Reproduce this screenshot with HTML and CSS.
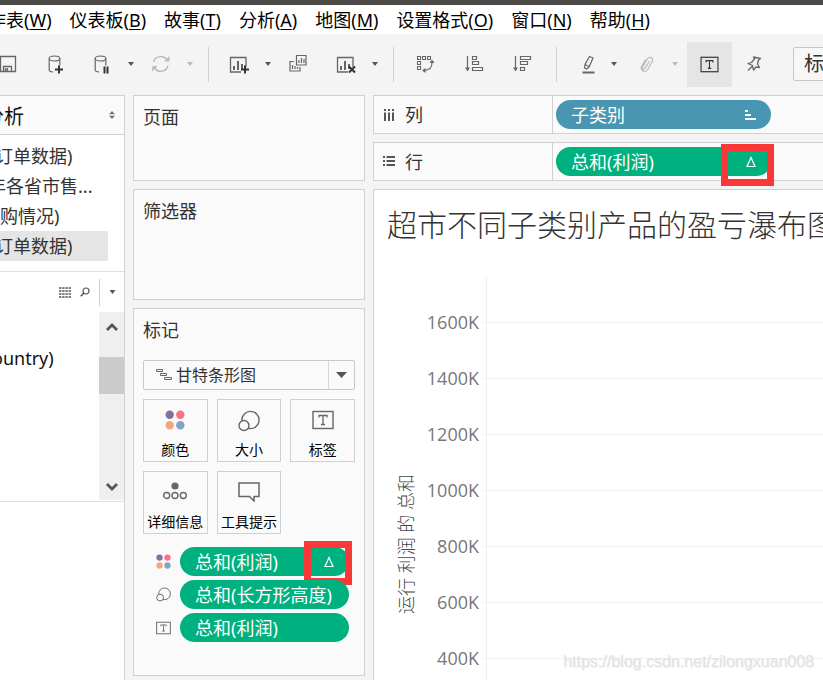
FILE: index.html
```html
<!DOCTYPE html>
<html lang="zh-CN">
<head>
<meta charset="utf-8">
<title>工作表</title>
<link rel="stylesheet" href="styles.css">
</head>
<body>
<svg class="defs" aria-hidden="true">
  <symbol id="caret" viewBox="0 0 6 4"><path d="M0 0h6L3 4z" fill="currentColor"/></symbol>
  <symbol id="db" viewBox="0 0 28 28"><g fill="none" stroke="#666" stroke-width="1.2"><ellipse cx="12.500" cy="8.500" rx="5.300" ry="2.500"/><path d="M7.200 8.500v11.500q0 1.600 4 2M17.800 8.500v7"/></g></symbol>
  <symbol id="chart" viewBox="0 0 28 28"><path d="M16 22H5.500V7.500h15.500V17" fill="none" stroke="#666" stroke-width="1.300"/><path d="M8 16h2v4H8zM12 11h2v9h-2zM16 14h2v5h-2z" fill="#666"/></symbol>
  <symbol id="dots" viewBox="0 0 20 20"><circle cx="4.700" cy="4.700" r="4.200" fill="#86709a"/><circle cx="15.300" cy="4.700" r="4.200" fill="#fa7280"/><circle cx="4.700" cy="15.300" r="4.200" fill="#f4a67c"/><circle cx="15.300" cy="15.300" r="4.200" fill="#82a4cb"/></symbol>
  <symbol id="size" viewBox="0 0 22 22"><g stroke="#666" stroke-width="1.400" fill="#fafafa"><circle cx="12.500" cy="10" r="8.600"/><circle cx="6" cy="15.500" r="5"/></g></symbol>
  <symbol id="text" viewBox="0 0 22 20"><rect x="1" y="1.500" width="20" height="17" fill="none" stroke="currentColor" stroke-width="1.400"/><path d="M7 7.500V5.500h8v2M11 5.500v9M9 14.500h4" fill="none" stroke="currentColor" stroke-width="1.300"/></symbol>
  <symbol id="delta" viewBox="0 0 10 12"><path d="M5 1.500L9 10.500H1z" fill="none" stroke="#fff" stroke-width="1.200"/></symbol>
</svg>
<div class="titlebar"></div>
<nav class="menu">
  <a href="#">工作表(<u>W</u>)</a><a href="#">仪表板(<u>B</u>)</a><a href="#">故事(<u>T</u>)</a><a href="#">分析(<u>A</u>)</a><a href="#">地图(<u>M</u>)</a><a href="#">设置格式(<u>O</u>)</a><a href="#">窗口(<u>N</u>)</a><a href="#">帮助(<u>H</u>)</a>
</nav>
<div class="toolbar">
  <button class="tool" aria-label="保存"><svg viewBox="0 0 28 28"><path d="M6.500 6.500h15v15h-15zM9.500 21v-4.500h8V21M11.500 21v-2h2v2" fill="none" stroke="#666" stroke-width="1.300"/></svg></button>
  <button class="tool g20" aria-label="新建数据源"><svg viewBox="0 0 28 28"><use href="#db"/><path d="M17 15.500v8M13 19.500h8" stroke="#333" stroke-width="2" fill="none"/></svg></button>
  <div class="split g18"><button class="tool" aria-label="暂停自动更新"><svg viewBox="0 0 28 28"><use href="#db"/><path d="M16.500 16.500v7M19.500 16.500v7" stroke="#333" stroke-width="2" fill="none"/></svg></button><button class="drop" aria-label="更新选项"><svg><use href="#caret"/></svg></button></div>
  <div class="split off g8"><button class="tool" aria-label="运行更新"><svg viewBox="0 0 28 28"><path d="M6.500 12a7.500 7.500 0 0 1 13.500-2M21 15.500a7.500 7.500 0 0 1-13.500 2.500" fill="none" stroke="#bbb" stroke-width="1.400"/><path d="M17 11.500h5.500V6zM10.500 16H5.500L5 21.500z" fill="#bbb"/></svg></button><button class="drop" aria-label="运行选项"><svg><use href="#caret"/></svg></button></div>
  <span class="sep g10"></span>
  <div class="split g16"><button class="tool" aria-label="新建工作表"><svg viewBox="0 0 28 28"><use href="#chart"/><path d="M20 15.500v8M16 19.500h8" stroke="#333" stroke-width="2"/></svg></button><button class="drop" aria-label="新建选项"><svg><use href="#caret"/></svg></button></div>
  <button class="tool g8" aria-label="复制工作表"><svg viewBox="0 0 28 28"><path d="M12.500 5.500h9.500v9.500h-9.500zM10 11.500H6v9.500h10v-4M15 13v-3M17.500 13V8M20 13V9M8.500 19v-4M11 19v-3M13.500 19v-2" fill="none" stroke="#666" stroke-width="1.200"/></svg></button>
  <div class="split g20"><button class="tool" aria-label="清除工作表"><svg viewBox="0 0 28 28"><use href="#chart"/><path d="M17 16.500l6 6M23 16.500l-6 6" stroke="#333" stroke-width="2"/></svg></button><button class="drop" aria-label="清除选项"><svg><use href="#caret"/></svg></button></div>
  <span class="sep g10"></span>
  <button class="tool g18" aria-label="交换行和列"><svg viewBox="0 0 28 28"><g fill="none" stroke="#666" stroke-width="1.100"><path d="M5.500 6.500h3v3h-3zM10.500 6.500h3v3h-3zM15.500 6.500h3v3h-3zM5.500 11.500h3v3h-3zM5.500 16.500h3v3h-3zM20 11v2q0 7-8 7.500"/></g><path d="M17.500 13L20 9.500l2.500 3.500zM13.500 18v5L10 20.500z" fill="#666"/></svg></button>
  <button class="tool g20" aria-label="升序排序"><svg viewBox="0 0 28 28"><path d="M7.500 6v14M12.500 6.500h4v3h-4zM12.500 11.500h6v3h-6zM12.500 17.500h10v3h-10z" fill="none" stroke="#666" stroke-width="1.200"/><path d="M5 17.500h5L7.500 21.500z" fill="#666"/></svg></button>
  <button class="tool g20" aria-label="降序排序"><svg viewBox="0 0 28 28"><path d="M7.500 6v14M12.500 6.500h10v3h-10zM12.500 11.500h7v3h-7zM12.500 17.500h4v3h-4z" fill="none" stroke="#666" stroke-width="1.200"/><path d="M5 17.500h5L7.500 21.500z" fill="#666"/></svg></button>
  <span class="sep g20"></span>
  <div class="split tight g18"><button class="tool" aria-label="突出显示"><svg viewBox="0 0 28 28"><path d="M14.500 6.500l3.500 1.500-4 9-2.500 2-2-1 .5-3.500zM10 14.500l4 2" fill="none" stroke="#666" stroke-width="1.200"/><path d="M7.500 22.500h12" stroke="#666" stroke-width="2"/></svg></button><button class="drop" aria-label="突出显示选项"><svg><use href="#caret"/></svg></button></div>
  <div class="split off g10"><button class="tool" aria-label="组成员"><svg viewBox="0 0 28 28"><path d="M17.500 11l-4.500 7.500q-1 1.500-2 .8t-.3-2.200l4.800-8.500q1.500-2 3.500-1t1.500 3.400l-5 9q-2 2.500-4.500 1t-1.500-4.500l4-7" fill="none" stroke="#bbb" stroke-width="1.200"/></svg></button><button class="drop" aria-label="组选项"><svg><use href="#caret"/></svg></button></div>
  <button class="tool on g4" aria-label="显示标记标签"><svg viewBox="0 0 22 20"><use href="#text"/></svg></button>
  <button class="tool g8" aria-label="固定轴"><svg viewBox="0 0 28 28"><path d="M13.500 7l7 1.500-2 1.500-1 4 2 3.500-3.500-.5-2.500 3-1-4.500-4.500-2 3.500-1 3-3.500zM12 16.500L8 20.500" fill="none" stroke="#666" stroke-width="1.300" stroke-linejoin="round"/></svg></button>
  <select class="fit" aria-label="适合"><option>标准</option></select>
</div>
<main class="work">
  <aside class="data">
    <header class="data-head"><span>分析</span><button aria-label="切换"><svg viewBox="0 0 6 8"><path d="M0 3.200h6L3 0zM0 4.800h6L3 8z" fill="#6b7580"/></svg></button></header>
    <ul class="sources">
      <li class="cut">订单数据)</li>
      <li class="cut-more">年各省市售...</li>
      <li>购情况)</li>
      <li class="cut current">订单数据)</li>
    </ul>
    <div class="finder">
      <button aria-label="查看数据"><svg width="12" height="11" viewBox="0 0 12 11"><path d="M0 1h12M0 4h12M0 7h12M0 10h12" stroke="#555" stroke-width="1.300" stroke-dasharray="2.400 .8"/></svg></button>
      <button aria-label="查找字段"><svg width="10" height="10" viewBox="0 0 10 10"><circle cx="6" cy="4" r="3" fill="none" stroke="#555" stroke-width="1.200"/><path d="M4 6L.8 9.300" stroke="#555" stroke-width="1.500"/></svg></button>
      <button class="finder-menu" aria-label="字段菜单"><svg width="7" height="4" viewBox="0 0 6 4"><use href="#caret"/></svg></button>
    </div>
    <div class="fields">
      <p>ountry)</p>
      <div class="scroll">
        <svg width="12" height="10" viewBox="0 0 12 10"><path d="M1 8l5-5 5 5" fill="none" stroke="#555" stroke-width="2.800"/></svg>
        <span class="thumb"></span>
        <svg width="12" height="10" viewBox="0 0 12 10"><path d="M1 2l5 5 5-5" fill="none" stroke="#555" stroke-width="2.800"/></svg>
      </div>
    </div>
  </aside>
  <section class="cards">
    <div class="card pages"><h2>页面</h2></div>
    <div class="card filters"><h2>筛选器</h2></div>
    <div class="card marks">
      <h2>标记</h2>
      <div class="marktype">
        <svg width="16" height="12" viewBox="0 0 16 12"><path d="M.5.500h6v2h-6zM4.500 4.500h6v2h-6zM8.500 8.500h7v2h-7z" fill="none" stroke="#666"/></svg>
        <select aria-label="标记类型"><option>甘特条形图</option></select>
        <span class="arrow"><svg width="11" height="6" viewBox="0 0 6 4" preserveAspectRatio="none"><path d="M0 0h6L3 4z" fill="#555"/></svg></span>
      </div>
      <div class="props">
        <button><svg width="20" height="20"><use href="#dots"/></svg>颜色</button>
        <button><svg width="22" height="22"><use href="#size"/></svg>大小</button>
        <button><svg width="22" height="20"><use href="#text"/></svg>标签</button>
        <button><svg width="24" height="18" viewBox="0 0 24 18"><circle cx="12" cy="4" r="3.600" fill="#666"/><g fill="none" stroke="#666" stroke-width="1.400"><circle cx="3.700" cy="13.500" r="3"/><circle cx="12" cy="13.500" r="3"/><circle cx="20.300" cy="13.500" r="3"/></g></svg>详细信息</button>
        <button><svg width="22" height="20" viewBox="0 0 22 20"><path d="M1 1h20v13.500h-5V19l-4.500-4.500H1z" fill="none" stroke="#666" stroke-width="1.500"/></svg>工具提示</button>
      </div>
      <div class="encodings">
        <div class="enc"><svg width="15" height="15"><use href="#dots"/></svg><button class="pill">总和(利润)<svg width="10" height="12"><use href="#delta"/></svg></button><span class="callout"></span></div>
        <div class="enc"><svg width="15" height="15"><use href="#size"/></svg><button class="pill">总和(长方形高度)</button></div>
        <div class="enc"><svg width="15" height="14"><use href="#text"/></svg><button class="pill">总和(利润)</button></div>
      </div>
    </div>
  </section>
  <section class="sheet">
    <div class="shelf"><div class="shelf-name"><svg width="12" height="12" viewBox="0 0 12 12"><path d="M2 0v2M6 0v2M10 0v2M2 3.500V12M6 3.500V12M10 3.500V12" stroke="#555" stroke-width="2"/></svg>列</div><div class="shelf-body"><button class="pill blue">子类别<svg width="11" height="10" viewBox="0 0 11 10"><path d="M0 1h3M0 5h6M0 9h11" stroke="#fff" stroke-width="2"/></svg></button></div></div>
    <div class="shelf"><div class="shelf-name"><svg width="12" height="12" viewBox="0 0 12 12"><path d="M0 1h2M0 5h2M0 9h2M3.500 1H12M3.500 5H12M3.500 9H12" stroke="#555" stroke-width="2"/></svg>行</div><div class="shelf-body"><button class="pill">总和(利润)<svg width="10" height="12"><use href="#delta"/></svg></button><span class="callout"></span></div></div>
    <div class="view">
      <h1>超市不同子类别产品的盈亏瀑布图</h1>
      <div class="chart">
        <div class="axis-title"><span>运行 利润 的 总和</span></div>
        <ol class="axis"><li>1600K</li><li>1400K</li><li>1200K</li><li>1000K</li><li>800K</li><li>600K</li><li>400K</li></ol>
        <div class="plot"><i></i><i></i><i></i><i></i><i></i><i></i><i></i></div>
      </div>
    </div>
  </section>
</main>
<div class="watermark">https://blog.csdn.net/zilongxuan008</div>
</body>
</html>
```
FILE: styles.css
```css
* { box-sizing: border-box; }
body {
  margin: 0;
  height: 100vh;
  display: flex;
  flex-direction: column;
  overflow: hidden;
  position: relative;
  background: #f4f4f4;
  color: #333;
  font: 18px/24px "Noto Sans", "Noto Sans CJK SC", sans-serif;
}
button, select { font: inherit; color: inherit; background: none; border: 0; padding: 0; margin: 0; appearance: none; }
h1, h2, p, ul, ol { margin: 0; padding: 0; list-style: none; font-weight: normal; }
svg { flex: none; }
.defs { position: absolute; width: 0; height: 0; }
.titlebar { flex: none; height: 5px; background: #4b4a47; }

.menu { flex: none; display: flex; gap: 18px; height: 29px; background: #fff; line-height: 31px; white-space: nowrap; }
.menu a { color: #000; text-decoration: none; }
.menu a:first-child { margin-left: -30px; }
.menu u { text-underline-offset: 2px; text-decoration-thickness: 1px; }

.toolbar { flex: none; display: flex; align-items: center; height: 61px; margin-left: -6px; padding-bottom: 1px; overflow: hidden; }
.tool { flex: none; width: 28px; height: 28px; }
.tool svg { display: block; width: 28px; height: 28px; }
.tool.on { width: 45px; height: 45px; background: #e5e5e5; color: #333; display: grid; place-items: center; }
.tool.on svg { width: 19px; height: 17px; }
.split { flex: none; display: flex; align-items: center; gap: 7px; color: #555; }
.split.tight { gap: 3px; }
.split.off { color: #bbb; }
.drop { width: 16px; height: 28px; display: grid; place-items: center; }
.drop svg { width: 6px; height: 4px; }
.sep { flex: none; width: 1px; height: 35px; background: #d0d0d0; }
.g4 { margin-left: 4px; }
.g8 { margin-left: 8px; }
.g10 { margin-left: 10px; }
.g16 { margin-left: 16px; }
.g18 { margin-left: 18px; }
.g20 { margin-left: 20px; }
.fit { flex: none; width: 120px; height: 34px; margin-left: 25px; padding-left: 10px; border: 1px solid #c8c8c8; border-radius: 2px; background: #f7f7f7; font-size: 20px; }

.work { flex: 1; min-height: 0; display: flex; gap: 8px; }
.data { flex: none; width: 125px; border: solid #d0d0d0; border-width: 1px 1px 0 0; background: #fff; overflow: hidden; }
.data-head { display: flex; justify-content: space-between; align-items: center; height: 39px; padding-right: 9px; border-bottom: 1px solid #d0d0d0; background: #fafafa; font-size: 20px; line-height: 32px; color: #111; }
.data-head span { margin-left: -16px; padding-top: 3px; }
.data-head svg { display: block; width: 6px; height: 8px; }
.sources { padding: 6px 16px 10px 0; border-bottom: 1px solid #e0e0e0; line-height: 30px; white-space: nowrap; }
.sources li { height: 30px; }
.cut { text-indent: -5px; }
.cut-more { text-indent: -12px; }
.current { background: #e5e5e5; }
.finder { display: flex; justify-content: flex-end; align-items: center; gap: 9px; height: 40px; }
.finder button { display: grid; place-items: center; }
.finder .finder-menu { width: 25px; height: 27px; border-left: 1px solid #d0d0d0; color: #555; }
.fields { display: flex; justify-content: space-between; height: 190px; border-bottom: 1px solid #e0e0e0; color: #111; }
.fields p { margin: 34px 0 0 -8px; }
.scroll { display: flex; flex-direction: column; align-items: center; width: 25px; height: 188px; padding: 10px 0 8px; background: #efefef; }
.thumb { width: 100%; height: 37px; margin: 25px 0 auto; background: #cbcbcb; }

.cards { flex: none; width: 232px; display: flex; flex-direction: column; gap: 8px; }
.card { flex: none; padding: 9px 9px 0; border: 1px solid #d0d0d0; background: #fafafa; }
.card h2 { font-size: 18px; }
.pages { height: 86px; }
.filters { height: 111px; }
.marks { height: 368px; }
.marktype { display: flex; align-items: center; height: 30px; margin-top: 18px; padding-left: 12px; border: 1px solid #c8c8c8; border-radius: 2px; font-size: 16px; }
.marktype select { flex: 1; padding-left: 4px; }
.arrow { width: 26px; height: 100%; border-left: 1px solid #d8d8d8; display: grid; place-items: center; }
.props { display: grid; grid-template-columns: repeat(3, 1fr); gap: 9px; margin-top: 9px; }
.props button { display: flex; flex-direction: column; align-items: center; justify-content: space-between; height: 63px; padding-top: 10px; border: 1px solid #d0d0d0; color: #000; font-size: 14px; line-height: 22px; white-space: nowrap; }
.props svg { color: #666; }
.encodings { display: grid; gap: 4px; margin: 13px 6px 0 13px; }
.enc { position: relative; display: flex; align-items: center; gap: 9px; color: #666; }
.pill { display: flex; align-items: center; justify-content: space-between; width: 169px; height: 29px; padding: 0 15px; border-radius: 15px; background: #00b180; color: #fff; white-space: nowrap; }
.pill.blue { background: #4996b2; }
.callout { position: absolute; border: 7px solid #fb3838; }
.enc .callout { right: -3px; top: -6px; width: 48px; height: 44px; }

.sheet { flex: 1; min-width: 0; display: flex; flex-direction: column; gap: 8px; }
.shelf { flex: none; display: flex; height: 39px; border: solid #d0d0d0; border-width: 1px 0 1px 1px; background: #fafafa; }
.shelf-name { display: flex; align-items: center; gap: 10px; width: 178px; padding-left: 9px; }
.shelf-body { position: relative; display: flex; align-items: center; padding-left: 3px; border-left: 1px solid #d0d0d0; }
.shelf .pill { width: 215px; }
.shelf .callout { right: -3px; top: 1px; width: 53px; height: 42px; }
.view { flex: 1; min-height: 0; border: solid #d0d0d0; border-width: 1px 0 0 1px; background: #fff; overflow: hidden; }
.view h1 { margin: 14px 0 0 13px; font-size: 30px; line-height: 42px; font-weight: 300; white-space: nowrap; }
.chart { display: flex; height: 440px; margin-top: 32px; color: #777; font-weight: 300; }
.axis-title { width: 46px; padding: 196px 0 0 20px; color: #444; }
.axis-title span { display: block; writing-mode: vertical-rl; text-orientation: sideways; transform: rotate(180deg); white-space: nowrap; }
.axis { width: 59px; padding-top: 16px; text-align: right; line-height: 56px; font-family: "Open Sans", "Noto Sans", sans-serif; }
.plot { flex: 1; display: flex; flex-direction: column; gap: 55px; margin-left: 7px; padding-top: 44px; border-left: 1px solid #eee; }
.plot i { height: 1px; margin-left: -4px; background: #f0f0f0; }
.watermark { position: absolute; right: 9px; bottom: 6px; font: 16px/24px "Liberation Sans", sans-serif; color: #e2e2e2; text-shadow: 1px 1px 0 #f2f2f2; }
```
